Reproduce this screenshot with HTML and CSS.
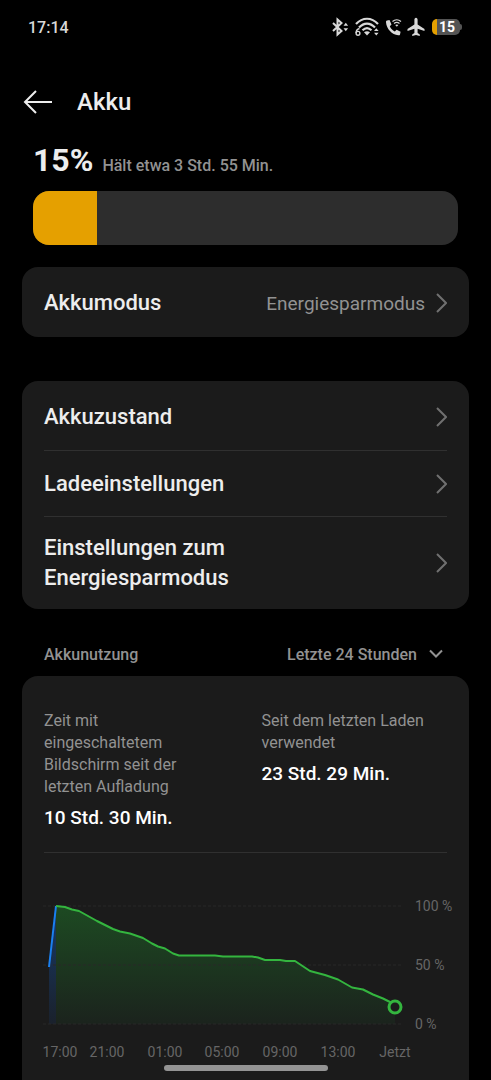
FILE: index.html
```html
<!DOCTYPE html>
<html lang="de">
<head>
<meta charset="utf-8">
<meta name="viewport" content="width=device-width, initial-scale=1">
<title>Akku</title>
<link rel="stylesheet" href="styles.css">
</head>
<body class="screen">
<div class="statusbar">
  <span>17:14</span>
  <div class="status-icons">
    <svg width="18" height="20" viewBox="0 0 18 20" fill="none" stroke="#d8d8d8" stroke-width="2" aria-label="Bluetooth" role="img">
      <path d="M2 6l8.500 8L6.500 17.500v-15L10.500 6 2 14"/>
      <path d="M12.500 8.800l2.300-3 2.300 3zM12.500 11.200l2.300 3 2.300-3z" fill="#d8d8d8" stroke="none"/>
    </svg>
    <svg width="26" height="20" viewBox="0 0 26 20" fill="none" stroke="#d8d8d8" stroke-width="2.200" aria-label="WLAN 6" role="img">
      <path d="M2 7C8.500 0 17.500 0 24 7M5 10.500C10 5.200 16 5.200 21 10.500M8.500 13.300C11.500 10.300 14.500 10.300 17.500 13.300"/>
      <path d="M10 15.200Q13 13.200 16 15.200L13 18.500z" fill="#d8d8d8" stroke="none"/>
      <path d="M20 14l2.300-2.800 2.300 2.800zM20 15.800l2.300 2.800 2.300-2.800z" fill="#d8d8d8" stroke="none"/>
      <path d="M5.500 11.500C3.300 12 2.100 13.500 2.100 16" stroke-width="1.400"/>
      <circle cx="4" cy="16.300" r="1.900" stroke-width="1.400"/>
    </svg>
    <svg width="17" height="20" viewBox="0 0 17 20" fill="none" stroke="#d8d8d8" aria-label="WLAN-Anruf" role="img">
      <path d="M2 3.500L4.500 3l2 4.500-1.700 1.800c1 2.400 2.600 4.100 5 5.200l1.800-1.800 4 2-.6 2.700c-.2.800-1 1-1.800.9C7 17.500 1.500 12 1 5.200c0-.8.200-1.500 1-1.700z" fill="#d8d8d8" stroke="none"/>
      <path d="M7.500 4.500c2.500-2.300 6-2.300 8.500 0M9 6.500c1.700-1.500 3.800-1.500 5.500 0" stroke-width="1.200"/>
      <path d="M10.200 8Q11.800 6.800 13.400 8L11.800 9.800z" fill="#d8d8d8" stroke="none"/>
    </svg>
    <svg width="18" height="20" viewBox="0 0 18 20" fill="#d8d8d8" aria-label="Flugmodus" role="img">
      <path d="M9 .8c1 0 1.600 1 1.600 2.200v4.500L17.500 12v2l-6.900-2.200v4.200l2.200 1.500V19L9 18l-3.800 1v-1.500L7.400 16v-4.200L.5 14v-2l6.900-4.500V3C7.400 1.800 8 .8 9 .8z"/>
    </svg>
    <span class="battery"><span class="battery-body">15</span></span>
  </div>
</div>

<header class="titlebar">
  <button class="back" type="button" aria-label="Zurück">
    <svg width="30" height="26" viewBox="0 0 30 26" fill="none" stroke="#ededed" stroke-width="2"><path d="M29 13H2M13 2L2 13l11 11"/></svg>
  </button>
  <h1 class="title">Akku</h1>
</header>

<main class="content">
  <section class="level">
    <div class="level-text"><strong class="percent">15%</strong><span class="remaining">Hält etwa 3 Std. 55 Min.</span></div>
    <div class="meter" role="progressbar" aria-label="Akkustand" aria-valuenow="15" aria-valuemin="0" aria-valuemax="100"><div class="meter-fill" style="width:15%"></div></div>
  </section>

  <nav class="card card-mode">
    <a class="row" href="#modus"><span class="row-label">Akkumodus</span><span class="row-value">Energiesparmodus</span><svg class="chevron" width="12" height="20" viewBox="0 0 12 20"><path d="M2 1L11 10l-9 9"/></svg></a>
  </nav>

  <nav class="card card-list">
    <a class="row" href="#zustand"><span class="row-label">Akkuzustand</span><svg class="chevron" width="12" height="20" viewBox="0 0 12 20"><path d="M2 1L11 10l-9 9"/></svg></a>
    <a class="row" href="#laden"><span class="row-label">Ladeeinstellungen</span><svg class="chevron" width="12" height="20" viewBox="0 0 12 20"><path d="M2 1L11 10l-9 9"/></svg></a>
    <a class="row" href="#sparen"><span class="row-label">Einstellungen zum Energiesparmodus</span><svg class="chevron" width="12" height="20" viewBox="0 0 12 20"><path d="M2 1L11 10l-9 9"/></svg></a>
  </nav>

  <div class="usage-head">
    <label for="period">Akkunutzung</label>
    <span class="period">
      <select id="period" class="period-select"><option>Letzte 24 Stunden</option></select>
      <svg width="14" height="10" viewBox="0 0 14 10" fill="none" stroke="#929292" stroke-width="2"><path d="M1 1.500l6 6 6-6"/></svg>
    </span>
  </div>

  <section class="card usage">
    <dl class="stats">
      <div class="stat"><dt>Zeit mit eingeschaltetem Bildschirm seit der letzten Aufladung</dt><dd>10 Std. 30 Min.</dd></div>
      <div class="stat"><dt>Seit dem letzten Laden verwendet</dt><dd>23 Std. 29 Min.</dd></div>
    </dl>
    <svg class="chart" viewBox="0 0 447 174" role="img" aria-label="Akkustand der letzten 24 Stunden">
      <defs>
        <linearGradient id="green" x1="0" y1="0" x2="0" y2="1"><stop offset="0" stop-color="#1d4a22"/><stop offset="1" stop-color="#1b231d"/></linearGradient>
        <linearGradient id="blue" x1="0" y1="0" x2="0" y2="1"><stop offset="0" stop-color="#173a68"/><stop offset="1" stop-color="#1a212c"/></linearGradient>
      </defs>
      <path fill="url(#blue)" d="M27 77L34 16V134H27z"/>
      <path fill="url(#green)" d="M34 16L43 17 50 19.500 57 21 75 31 91 39 98 41.500 108 43.500 121 48 130 53.500 136 56.500 143 58.500 151 63.500 157 65.500H193L201 66.500H230L236 67.500 243 70H258L264 71H273L288 81 303 85 316 89.500 330 97.500 341 99.500 351 104.500 361 108.500 368 112 373 117V134H34z"/>
      <path class="grid" d="M21 16H380M21 75H380M21 134H380"/>
      <path class="line-blue" d="M27 77L34 16"/>
      <path class="line-green" d="M34 16L43 17 50 19.500 57 21 75 31 91 39 98 41.500 108 43.500 121 48 130 53.500 136 56.500 143 58.500 151 63.500 157 65.500H193L201 66.500H230L236 67.500 243 70H258L264 71H273L288 81 303 85 316 89.500 330 97.500 341 99.500 351 104.500 361 108.500 368 112 373 117"/>
      <circle class="now" cx="373" cy="117" r="6"/>
      <g class="axis">
        <text x="393" y="21">100 %</text><text x="393" y="80">50 %</text><text x="393" y="139">0 %</text>
      </g>
      <g class="axis axis-x">
        <text x="38" y="167">17:00</text><text x="85" y="167">21:00</text><text x="143" y="167">01:00</text><text x="200" y="167">05:00</text><text x="258" y="167">09:00</text><text x="316" y="167">13:00</text><text x="373" y="167">Jetzt</text>
      </g>
    </svg>
  </section>
</main>
<div class="home-indicator"></div>
</body>
</html>
```
FILE: styles.css
```css
* { box-sizing: border-box; }

.screen {
  margin: 0;
  min-height: 100vh;
  display: flex;
  flex-direction: column;
  background: #000;
  color: #ededed;
  font-family: Roboto, "Noto Sans", sans-serif;
  font-size: 16px;
}

.statusbar {
  height: 54px;
  padding: 0 29px 0 28px;
  display: flex;
  align-items: center;
  justify-content: space-between;
  font-weight: 500;
  color: #d8d8d8;
}
.status-icons { display: flex; align-items: center; gap: 5px; }
.battery { display: flex; align-items: center; margin-left: 2px; }
.battery-body {
  width: 28px;
  height: 16px;
  padding-left: 2px;
  border-radius: 5px;
  background: linear-gradient(90deg, #e5a000 5px, #545454 5px);
  color: #fff;
  font-size: 14px;
  font-weight: 700;
  line-height: 16px;
  text-align: center;
}
.battery::after {
  content: "";
  width: 2px;
  height: 6px;
  border-radius: 0 2px 2px 0;
  background: #545454;
}

.titlebar {
  height: 90px;
  padding: 6px 23px 0;
  display: flex;
  align-items: center;
  gap: 24px;
}
.back {
  display: flex;
  padding: 0;
  border: 0;
  background: none;
}
.title { margin: 0; font-size: 24px; font-weight: 500; }

.content {
  flex: 1;
  display: flex;
  flex-direction: column;
  padding: 0 22px;
}

.level { padding: 0 11px; }
.level-text { display: flex; align-items: baseline; gap: 9px; line-height: 32px; }
.percent { font-size: 32px; font-weight: 700; }
.remaining { color: #929292; font-weight: 500; }
.meter {
  height: 54px;
  margin-top: 9px;
  border-radius: 16px;
  background: #2d2d2d;
  overflow: hidden;
}
.meter-fill { height: 100%; background: #e5a000; }

.card { border-radius: 16px; background: #1b1b1b; }
.card-mode { margin-top: 22px; padding: 3px 22px 1px; }
.card-list { margin-top: 44px; padding: 3px 22px 0; }

.row {
  min-height: 66px;
  display: flex;
  align-items: center;
  gap: 10px;
  color: inherit;
  text-decoration: none;
}
.row + .row { border-top: 1px solid #303030; }
.row:last-child:not(:first-child) { min-height: 93px; }
.row-label {
  flex: 1;
  padding-right: 120px;
  font-size: 22px;
  font-weight: 500;
  line-height: 30px;
}
.row-value { color: #929292; font-size: 19px; }
.card-mode .row-label { padding-right: 0; }
.chevron { flex: none; fill: none; stroke: #707070; stroke-width: 2; }

.usage-head {
  height: 67px;
  padding: 23px 26px 0 22px;
  display: flex;
  align-items: center;
  justify-content: space-between;
  color: #929292;
  font-weight: 500;
}
.period { display: flex; align-items: center; gap: 12px; }
.period-select {
  appearance: none;
  padding: 0;
  border: 0;
  background: none;
  color: inherit;
  font: inherit;
}

.usage {
  flex: 1;
  border-radius: 16px 16px 0 0;
}
.stats {
  display: grid;
  grid-template-columns: 1fr 1fr;
  gap: 32px;
  margin: 0 22px;
  padding: 34px 0 20px;
  border-bottom: 1px solid #303030;
}
.stat dt { padding-right: 16px; color: #929292; line-height: 22px; }
.stat dd { margin: 6px 0 0; font-size: 19px; font-weight: 500; line-height: 28px; color: #fff; }

.chart { display: block; width: 100%; margin-top: 37px; }
.grid { fill: none; stroke: #292929; stroke-dasharray: 3 2; }
.line-blue { fill: none; stroke: #1a80f0; stroke-width: 2; }
.line-green { fill: none; stroke: #34b53f; stroke-width: 2; stroke-linejoin: round; }
.now { fill: #1b1b1b; stroke: #34b53f; stroke-width: 3; }
.axis { fill: #666; font-size: 14px; }
.axis-x { text-anchor: middle; }

.home-indicator {
  position: fixed;
  left: 50%;
  bottom: 9px;
  width: 164px;
  height: 6px;
  border-radius: 3px;
  background: #949494;
  transform: translateX(-50%);
}
```
